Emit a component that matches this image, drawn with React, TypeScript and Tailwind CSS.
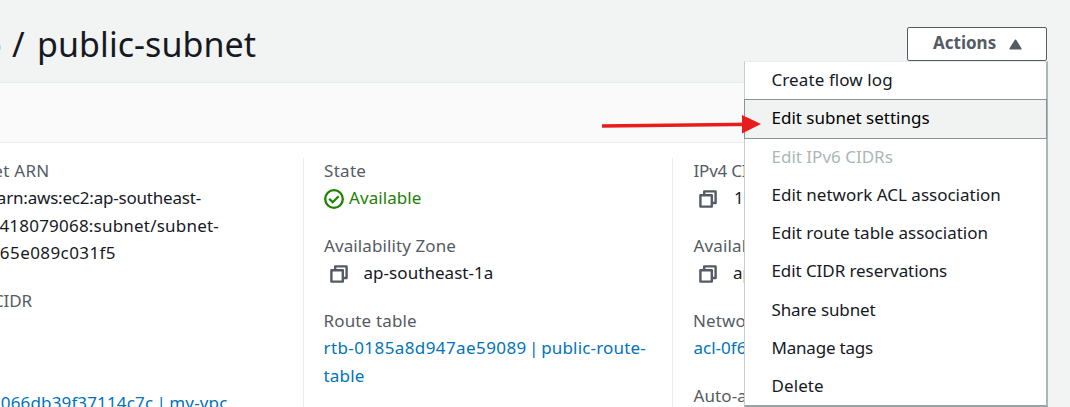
import type { ReactNode } from 'react';

const menuItems = [
  { label: 'Create flow log', style: 'h-[37px] tracking-[0.1px]' },
  { label: 'Edit subnet settings', style: 'h-10 border border-[#879596] bg-[#f1f3f3] text-black tracking-[0px] -mx-px' },
  { label: 'Edit IPv6 CIDRs', style: 'h-[38px] text-[#aab7b8] tracking-[0px]' },
  { label: 'Edit network ACL association', style: 'h-[38px]' },
  { label: 'Edit route table association', style: 'h-[38px]' },
  { label: 'Edit CIDR reservations', style: 'h-[38px] tracking-[-0.08px]' },
  { label: 'Share subnet', style: 'h-[39px] tracking-[-0.11px]' },
  { label: 'Manage tags', style: 'h-[38px] tracking-[-0.2px]' },
  { label: 'Delete', style: 'h-[37px] tracking-[0.1px]' },
];

function CopyIcon() {
  return (
    <svg className="ml-[6px] mr-4 mt-[6px] h-[18px] w-[18px] shrink-0" viewBox="0 0 18 18" fill="none" stroke="#545b64" strokeWidth="2.4" strokeLinejoin="round">
      <path d="M5.2 5V1.4h11.4V13H13" />
      <path d="M1.4 5.2h11.4v11.4H1.4z" />
    </svg>
  );
}

function StatusIcon() {
  return (
    <svg className="mr-[5px] mt-[5px] h-5 w-5 shrink-0" viewBox="0 0 20 20" fill="none" stroke="#1d8102" strokeWidth="2.3">
      <circle cx="10" cy="10" r="8.8" />
      <path d="M5.2 9.7l3.5 3.5 6-6" />
    </svg>
  );
}

function Field({ label, labelStyle, children }: { label: string; labelStyle: string; children: ReactNode }) {
  return (
    <div className="mb-5">
      <div className={`text-[#545b64] ${labelStyle}`}>{label}</div>
      <div className="flex">{children}</div>
    </div>
  );
}

export default function App() {
  return (
    <div className="relative flex h-[407px] w-[1070px] flex-col overflow-hidden whitespace-nowrap bg-[#f2f3f3] font-['Noto_Sans','Open_Sans',sans-serif] text-[17px] leading-[27.5px] text-[#16191f]">
      <header className="flex h-[82px] shrink-0 items-start justify-between pr-[23px]">
        <div className="flex items-center pt-[22px]">
          <span className="mt-[6px] h-[5px] w-px rounded-r-full bg-[#a3e0ea]" />
          <h1 className="ml-[11px] text-[34px] leading-[44px] tracking-[0.05px] [word-spacing:3.5px]">/ public-subnet</h1>
        </div>
        <button className="mt-[27px] flex h-[34px] w-[140px] items-center rounded-[2px] border border-[#545b64] bg-white pl-[25px] pb-[2px] font-bold tracking-[0px] text-[#545b64]">
          Actions
          <svg className="ml-[13px] mt-[2px] h-[11px] w-[13px]" viewBox="0 0 13 11">
            <path d="M6.5 1.3L11.8 9.7H1.2z" fill="#545b64" stroke="#545b64" strokeWidth="1.6" strokeLinejoin="round" />
          </svg>
        </button>
      </header>

      <div className="h-[61px] w-[1047px] shrink-0 border-y border-[#eaeded] bg-[#fafafa]" />

      <main className="flex w-[1047px] flex-1 items-stretch bg-white pt-[15px]">
        <section className="flex w-[303px] shrink-0 flex-col">
          <div className="-mt-[1.3px] flex w-[49.5px] justify-end text-[#545b64] tracking-[0.28px]">et ARN</div>
          <div className="flex w-[201px] justify-end tracking-[-0.2px]">arn:aws:ec2:ap-southeast-</div>
          <div className="flex w-[219px] justify-end tracking-[0.21px]">418079068:subnet/subnet-</div>
          <div className="flex w-[116px] justify-end tracking-[0.42px]">65e089c031f5</div>
          <div className="mt-5 flex w-[32px] justify-end text-[#545b64] tracking-[-0.1px]">CIDR</div>
          <div className="mt-[75px] flex w-[227.5px] justify-end text-[#0073bb] tracking-[0.15px] [word-spacing:-1.3px]">066db39f37114c7c | my-vpc</div>
        </section>

        <section className="w-[369px] shrink-0 border-l border-[#eaeded] pl-5">
          <div className="-mt-[1.3px]">
            <Field label="State" labelStyle="tracking-[0.3px]">
              <StatusIcon />
              <span className="text-[#1d8102] tracking-[0.08px]">Available</span>
            </Field>
            <Field label="Availability Zone" labelStyle="tracking-[0.1px]">
              <CopyIcon />
              <span className="-ml-[0.5px] tracking-[0.05px]">ap-southeast-1a</span>
            </Field>
            <Field label="Route table" labelStyle="tracking-[0.15px] -ml-[0.5px]">
              <a className="-ml-[0.5px] text-[#0073bb] tracking-[0.17px]">
                <span className="tracking-[0.41px] [word-spacing:-2.5px]">rtb-0185a8d947ae59089 | </span>public-route-
                <br />
                <span className="tracking-[0.2px]">table</span>
              </a>
            </Field>
          </div>
        </section>

        <section className="w-[375px] shrink-0 border-l border-[#eaeded] pl-5">
          <div className="-mt-[1.3px]">
            <Field label="IPv4 CI" labelStyle="tracking-[-0.2px] pl-[0.5px]">
              <CopyIcon />
              <span className="ml-px">10</span>
            </Field>
            <Field label="Availab" labelStyle="tracking-[0.14px] pl-[0.5px]">
              <CopyIcon />
              <span>ap</span>
            </Field>
            <Field label="Networ" labelStyle="tracking-[0.1px]">
              <a className="pl-[0.5px] text-[#0073bb]">acl-0f6</a>
            </Field>
            <Field label="Auto-as" labelStyle="tracking-[0.1px] pl-[0.5px]">{null}</Field>
          </div>
        </section>
      </main>

      <ul className="absolute left-[744px] top-[61px] h-[346px] w-[304px] border border-b-2 border-r-2 border-[#aab7b8] border-t-[#eaeded] border-l-[#c5cdcf] border-b-[#97a3a5] bg-white text-[#16191f]">
        {menuItems.map((item) => (
          <li key={item.label} className={`flex items-center pb-[2px] pl-[26.5px] ${item.style}`}>{item.label}</li>
        ))}
      </ul>

      <svg className="absolute left-[600px] top-[112px] h-6 w-[164px]" viewBox="0 0 164 24">
        <path d="M2 14L156 12.3" stroke="#e81c1c" strokeWidth="3.6" />
        <path d="M142 3L161 12L142 21.5z" fill="#e81c1c" />
      </svg>
    </div>
  );
}
